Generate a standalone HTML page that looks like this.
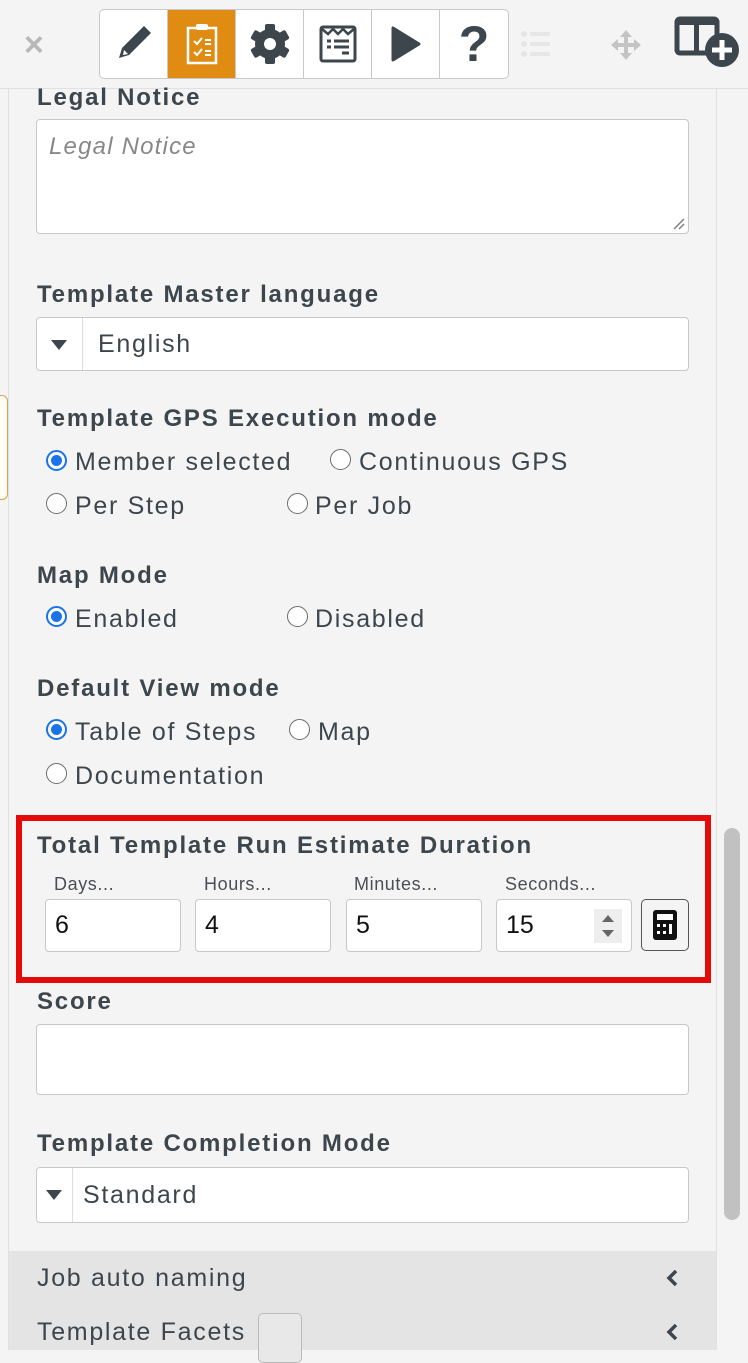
<!DOCTYPE html>
<html><head><meta charset="utf-8"><style>
*{box-sizing:border-box;margin:0;padding:0}
body{width:748px;height:1350px;overflow:hidden;background:#f4f4f4;font-family:"Liberation Sans",sans-serif;color:#3d464d;position:relative}
.a{position:absolute}
.lbl{position:absolute;left:37px;font-weight:bold;font-size:24px;line-height:28px;white-space:nowrap;letter-spacing:1.8px}
.box{position:absolute;background:#fff;border:1px solid #c8c8c8;border-radius:4px}
.rad{position:absolute;width:21px;height:21px;border-radius:50%;border:1.5px solid #6b6b6b;background:#fff}
.rad.on{border:2px solid #1a73e8}
.rad.on::after{content:"";position:absolute;left:3px;top:3px;width:11px;height:11px;border-radius:50%;background:#1a73e8}
.rt{position:absolute;font-size:25px;line-height:30px;white-space:nowrap;letter-spacing:1.7px}
.sm{position:absolute;font-size:18px;color:#4a4f55;line-height:22px;letter-spacing:0.6px}
.num{position:absolute;font-size:25px;color:#111;line-height:30px}
.btn{position:absolute;top:10px;width:68px;height:68px;border-right:1px solid #c8c8c8;display:flex;align-items:center;justify-content:center}
</style></head><body>
<div class="a" style="left:8px;top:0;width:1px;height:1350px;background:#e0e0e0"></div>
<div class="a" style="left:716px;top:89px;width:1px;height:1261px;background:#e0e0e0"></div>
<div class="a" style="left:724px;top:828px;width:16px;height:392px;background:#c1c1c1;border-radius:8px"></div>
<div class="a" style="left:-10px;top:395px;width:18px;height:105px;border:1px solid #e0a050;border-radius:6px;background:#fffdf6"></div>
<div class="a" style="left:0;top:0;width:748px;height:89px;background:#f4f4f4;border-bottom:1px solid #e0e0e0"></div>
<div class="a" style="left:24px;top:28px;font-size:34px;color:#b8b8b8;font-weight:bold;line-height:34px">×</div>
<div class="a" style="left:99px;top:9px;width:410px;height:70px;border:1px solid #c8c8c8;border-radius:5px;background:#fff;overflow:hidden"></div>
<div class="btn" style="left:100px"><svg width="40" height="44" viewBox="0 0 40 44"><path d="M30 4l7 7-22 22-10 3 3-10z" fill="#3d464d"/><path d="M10 28l4 4-5 1z" fill="#fff"/></svg></div>
<div class="btn" style="left:168px;background:#e08c12"><svg width="34" height="44" viewBox="0 0 34 44"><rect x="3" y="6" width="28" height="35" fill="none" stroke="#fff" stroke-width="2.5"/><rect x="11" y="2" width="12" height="6" rx="2" fill="#fff"/><path d="M9 19l3 3 5-6M9 30l3 3 5-6" stroke="#fff" stroke-width="2" fill="none"/><path d="M20 18h6M20 22h6M20 29h6M20 33h6" stroke="#fff" stroke-width="2"/></svg></div>
<div class="btn" style="left:236px"><svg width="46" height="46" viewBox="0 0 46 46"><g fill="#3d464d"><circle cx="23" cy="23" r="15"/><rect x="18" y="3" width="10" height="40" rx="2"/><rect x="18" y="3" width="10" height="40" rx="2" transform="rotate(60 23 23)"/><rect x="18" y="3" width="10" height="40" rx="2" transform="rotate(120 23 23)"/></g><circle cx="23" cy="23" r="6" fill="#fff"/></svg></div>
<div class="btn" style="left:304px"><svg width="40" height="40" viewBox="0 0 40 40"><rect x="3" y="3" width="34" height="34" rx="2" fill="none" stroke="#3d464d" stroke-width="3"/><path d="M4 5l6 5 5-5 5 5 5-5 5 5 6-5" stroke="#3d464d" stroke-width="2.5" fill="none"/><path d="M9 17h4M16 17h15M9 23h4M16 23h15M24 29h7" stroke="#3d464d" stroke-width="3"/></svg></div>
<div class="btn" style="left:372px"><svg width="34" height="40" viewBox="0 0 34 40"><path d="M4 4v32l26-16z" fill="#3d464d" stroke="#3d464d" stroke-width="3" stroke-linejoin="round"/></svg></div>
<div class="btn" style="left:440px;border-right:none"><span style="font-size:50px;font-weight:bold;color:#3d464d;line-height:50px">?</span></div>
<svg class="a" style="left:519px;top:30px" width="34" height="28" viewBox="0 0 34 28"><g fill="#e6e6e6"><circle cx="5" cy="4" r="3"/><circle cx="5" cy="14" r="3"/><circle cx="5" cy="24" r="3"/><rect x="11" y="2" width="20" height="4"/><rect x="11" y="12" width="20" height="4"/><rect x="11" y="22" width="20" height="4"/></g></svg>
<svg class="a" style="left:610px;top:29px" width="32" height="32" viewBox="0 0 32 32"><g fill="#c4c4c4"><path d="M16 1l6 7H10zM16 31l6-7H10zM1 16l7-6v12zM31 16l-7-6v12z"/><rect x="14" y="6" width="4" height="20"/><rect x="6" y="14" width="20" height="4"/></g></svg>
<svg class="a" style="left:674px;top:16px" width="70" height="54" viewBox="0 0 70 54"><rect x="3" y="3" width="40" height="34" rx="3" fill="none" stroke="#3d464d" stroke-width="5"/><rect x="3" y="3" width="40" height="6" fill="#3d464d"/><rect x="20" y="5" width="5" height="32" fill="#3d464d"/><circle cx="48" cy="34" r="17" fill="#3d464d"/><path d="M48 24v20M38 34h20" stroke="#fff" stroke-width="5"/></svg>

<div class="lbl" style="top:84px">Legal Notice</div>
<div class="box" style="left:36px;top:119px;width:653px;height:115px"></div>
<div class="a" style="left:49px;top:133px;font-size:24px;font-style:italic;color:#888;letter-spacing:1.2px">Legal Notice</div>
<svg class="a" style="left:672px;top:217px" width="14" height="14"><path d="M2 12L12 2M7 12l5-5" stroke="#777" stroke-width="1.3"/></svg>

<div class="lbl" style="top:281px">Template Master language</div>
<div class="box" style="left:36px;top:317px;width:653px;height:54px"></div>
<div class="a" style="left:82px;top:318px;width:1px;height:52px;background:#ddd"></div>
<svg class="a" style="left:51px;top:340px" width="16" height="10"><path d="M0 0h16L8 10z" fill="#3d464d"/></svg>
<div class="rt" style="left:98px;top:329px">English</div>

<div class="lbl" style="top:405px">Template GPS Execution mode</div>
<div class="rad on" style="left:46px;top:450px"></div><div class="rt" style="left:75px;top:447px">Member selected</div>
<div class="rad" style="left:330px;top:449px"></div><div class="rt" style="left:359px;top:447px">Continuous GPS</div>
<div class="rad" style="left:46px;top:493px"></div><div class="rt" style="left:75px;top:491px">Per Step</div>
<div class="rad" style="left:287px;top:493px"></div><div class="rt" style="left:315px;top:491px">Per Job</div>

<div class="lbl" style="top:562px">Map Mode</div>
<div class="rad on" style="left:46px;top:606px"></div><div class="rt" style="left:75px;top:604px">Enabled</div>
<div class="rad" style="left:287px;top:606px"></div><div class="rt" style="left:315px;top:604px">Disabled</div>

<div class="lbl" style="top:675px">Default View mode</div>
<div class="rad on" style="left:46px;top:719px"></div><div class="rt" style="left:75px;top:717px">Table of Steps</div>
<div class="rad" style="left:289px;top:719px"></div><div class="rt" style="left:318px;top:717px">Map</div>
<div class="rad" style="left:46px;top:763px"></div><div class="rt" style="left:75px;top:761px">Documentation</div>

<div class="a" style="left:16px;top:815px;width:695px;height:168px;border:6px solid #e50a0a"></div>
<div class="lbl" style="top:832px">Total Template Run Estimate Duration</div>
<div class="sm" style="left:54px;top:873px">Days...</div>
<div class="sm" style="left:204px;top:873px">Hours...</div>
<div class="sm" style="left:354px;top:873px">Minutes...</div>
<div class="sm" style="left:505px;top:873px">Seconds...</div>
<div class="box" style="left:45px;top:899px;width:136px;height:53px"></div><div class="num" style="left:55px;top:910px">6</div>
<div class="box" style="left:195px;top:899px;width:136px;height:53px"></div><div class="num" style="left:205px;top:910px">4</div>
<div class="box" style="left:346px;top:899px;width:136px;height:53px"></div><div class="num" style="left:356px;top:910px">5</div>
<div class="box" style="left:496px;top:899px;width:136px;height:53px"></div><div class="num" style="left:506px;top:910px">15</div>
<div class="a" style="left:594px;top:909px;width:28px;height:34px;background:#eee"></div>
<svg class="a" style="left:600px;top:912px" width="16" height="28"><path d="M2 10l6-7 6 7zM2 18l6 7 6-7z" fill="#666"/></svg>
<div class="a" style="left:641px;top:899px;width:48px;height:52px;border:1px solid #555;border-radius:5px;background:#f4f4f4"></div>
<svg class="a" style="left:653px;top:910px" width="24" height="30"><rect x="0" y="0" width="24" height="30" rx="3" fill="#111"/><rect x="4" y="4" width="16" height="6" fill="#fff"/><g fill="#fff"><rect x="4" y="14" width="3" height="3"/><rect x="10" y="14" width="3" height="3"/><rect x="4" y="21" width="3" height="3"/><rect x="10" y="21" width="3" height="3"/><rect x="16" y="14" width="3" height="10"/></g></svg>

<div class="lbl" style="top:988px">Score</div>
<div class="box" style="left:36px;top:1024px;width:653px;height:71px"></div>

<div class="lbl" style="top:1130px">Template Completion Mode</div>
<div class="box" style="left:36px;top:1167px;width:653px;height:56px"></div>
<div class="a" style="left:72px;top:1168px;width:1px;height:54px;background:#ddd"></div>
<svg class="a" style="left:46px;top:1190px" width="16" height="10"><path d="M0 0h16L8 10z" fill="#3d464d"/></svg>
<div class="rt" style="left:83px;top:1180px">Standard</div>

<div class="a" style="left:9px;top:1251px;width:707px;height:99px;background:#e4e4e4"></div>
<div class="rt" style="left:37px;top:1263px">Job auto naming</div>
<div class="rt" style="left:37px;top:1317px">Template Facets</div>
<div class="a" style="left:258px;top:1313px;width:44px;height:50px;border:1px solid #bbb;border-radius:5px;background:#e8e8e8"></div>
<svg class="a" style="left:665px;top:1269px" width="14" height="18"><path d="M11 2L4 9l7 7" stroke="#3d464d" stroke-width="3.5" fill="none"/></svg>
<svg class="a" style="left:665px;top:1323px" width="14" height="18"><path d="M11 2L4 9l7 7" stroke="#3d464d" stroke-width="3.5" fill="none"/></svg>
</body></html>
